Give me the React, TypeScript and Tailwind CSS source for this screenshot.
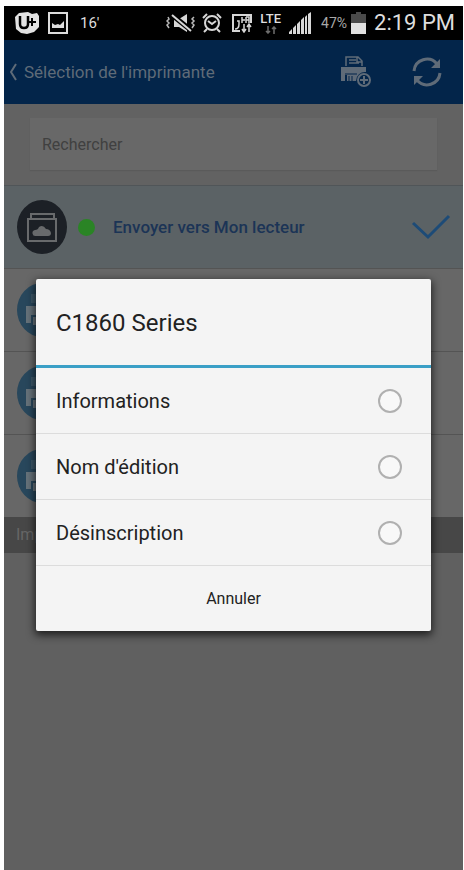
import React from "react";

function CarrierLogo() {
  return (
    <svg width="26" height="24" viewBox="0 0 26 24" aria-hidden="true">
      <path d="M1 6 5 2l9-1 4 2 5-1 2 3v11l-5 5-7 2-6-1-5-4z" fill="#e2e2e2" />
      <path d="M6 5v8q0 4 4 4t4-4V5" fill="none" stroke="#000" strokeWidth="2.5" />
      <path d="M15 11h7M18 7v8" fill="none" stroke="#000" strokeWidth="2" />
    </svg>
  );
}

function PictureIcon() {
  return (
    <svg width="20" height="24" viewBox="0 0 20 24" aria-hidden="true">
      <rect x="1" y="2" width="18" height="20" fill="none" stroke="#dcdcdc" strokeWidth="2" />
      <path d="M4 17v-5l3 2 3-1 2 1 4-4v7z" fill="#dcdcdc" />
    </svg>
  );
}

function MutedIcon() {
  return (
    <svg width="30" height="20" viewBox="0 0 30 20" fill="none" aria-hidden="true">
      <path d="M8 6h5l8-5v18l-8-5H8z" fill="#d6d6d6" />
      <path d="M6 2 26 18" stroke="#000" strokeWidth="5" />
      <path d="M6 2 25 18" stroke="#d6d6d6" strokeWidth="2" />
      <path d="m2 4 1 2-2 2 2 2-2 2 2 3M28 4l-2 2 2 2-2 2 2 2-2 3" stroke="#b9b9b9" strokeWidth="1.5" />
    </svg>
  );
}

function AlarmIcon() {
  return (
    <svg width="20" height="20" viewBox="0 0 20 20" fill="none" stroke="#d6d6d6" strokeWidth="2" aria-hidden="true">
      <circle cx="10" cy="10" r="7" />
      <path d="m6 8 4 3 4-3M1 5l4-4M19 5l-4-4M5 16l-3 3M15 16l3 3" />
    </svg>
  );
}

function CarModeIcon() {
  return (
    <svg width="20" height="20" viewBox="0 0 20 20" fill="none" stroke="#d6d6d6" strokeWidth="2" aria-hidden="true">
      <path d="M8 18H1V2h18v8" />
      <path d="M3 16q4 0 4-5V8H5M10 4v6M10 7h3M14 4v6M14 4h3v3h-3M17 7v3" strokeWidth="1.5" />
      <path d="M12 11v8M10 16l2 3 2-3M17 19v-7M15 14l2-3 2 3" strokeWidth="1.5" />
    </svg>
  );
}

function DataArrows() {
  return (
    <svg width="12" height="8" viewBox="0 0 12 8" fill="none" stroke="#6d6d6d" strokeWidth="1.5" aria-hidden="true">
      <path d="M3 0v7M1 5l2 2 2-2M9 8V1M7 3l2-2 2 2" />
    </svg>
  );
}

function SignalIcon() {
  return (
    <svg width="22" height="22" viewBox="0 0 22 22" fill="#d9d9d9" aria-hidden="true">
      <path d="M0 22v-2l3-3v5zM4 22v-6l3-3v9zM8 22V12l3-3v13zM12 22V8l3-3v17zM16 22V5l2-2v19zM19 22V2l3-2v22z" />
    </svg>
  );
}

function BatteryIcon() {
  return (
    <svg width="15" height="22" viewBox="0 0 15 22" aria-hidden="true">
      <path d="M5 0h5v2h5v10H0V2h5z" fill="#4b4b4b" />
      <path d="M0 11h15v11H0z" fill="#e0e0e0" />
    </svg>
  );
}

function StatusBar() {
  return (
    <div className="flex h-[34px] items-center bg-black pr-2 pl-[10px] text-[#dedede]">
      <CarrierLogo />
      <div className="ml-2">
        <PictureIcon />
      </div>
      <span className="ml-3 text-[15px] leading-5">16'</span>
      <div className="ml-auto flex items-center">
        <MutedIcon />
        <div className="ml-[6px]">
          <AlarmIcon />
        </div>
        <div className="ml-[10px]">
          <CarModeIcon />
        </div>
        <div className="ml-2 flex flex-col items-center">
          <span className="text-[13px] leading-[14px] font-medium">LTE</span>
          <DataArrows />
        </div>
        <div className="ml-2">
          <SignalIcon />
        </div>
        <span className="ml-[10px] text-[14px] leading-5 text-[#a8a8a8]">47%</span>
        <div className="ml-1">
          <BatteryIcon />
        </div>
        <span className="ml-2 text-[22px] leading-6">2:19 PM</span>
      </div>
    </div>
  );
}

function AddPrinterIcon() {
  return (
    <svg width="32" height="32" viewBox="0 0 32 32" fill="none" aria-hidden="true">
      <path d="M6 10V1h12l4 4v5M9 4h7M9 7h10M17 1v5h5" stroke="#5f6b78" strokeWidth="1.5" />
      <path d="M1 11h25v5a9 9 0 0 0-10 9H7v-6H5v6H1z" fill="#5f6b78" />
      <path d="M5 18h12M9 25v-5M12 25v-5" stroke="#03254a" strokeWidth="1" />
      <circle cx="24" cy="24" r="6" stroke="#5f6b78" strokeWidth="2" />
      <path d="M24 20v8M20 24h8" stroke="#5f6b78" strokeWidth="2" />
    </svg>
  );
}

function RefreshIcon() {
  return (
    <svg width="30" height="32" viewBox="0 0 30 32" fill="none" aria-hidden="true">
      <path d="M2 15A13 13 0 0 1 25 8M28 17A13 13 0 0 1 5 24" stroke="#5f6b78" strokeWidth="3" />
      <path d="M28 3v9h-9zM2 29V20h9z" fill="#5f6b78" />
    </svg>
  );
}

function Header() {
  return (
    <header className="flex h-16 items-center bg-[#03254a] pr-[21px] pl-[6px]">
      <button type="button" className="flex items-center gap-[7px] text-[17px] leading-6 text-[#5f6b78]">
        <svg width="7" height="18" viewBox="0 0 7 18" fill="none" aria-hidden="true">
          <path d="M6 1 1 9l5 8" stroke="#5f6b78" strokeWidth="2" />
        </svg>
        Sélection de l'imprimante
      </button>
      <button type="button" aria-label="Ajouter une imprimante" className="ml-auto">
        <AddPrinterIcon />
      </button>
      <button type="button" aria-label="Actualiser" className="ml-10">
        <RefreshIcon />
      </button>
    </header>
  );
}

function DriveBadge() {
  return (
    <svg width="52" height="54" viewBox="0 0 52 54" fill="none" aria-hidden="true">
      <ellipse cx="26" cy="27" rx="25" ry="27" fill="#1c2026" />
      <path d="M15 18v-4h23v4" stroke="#686a6c" strokeWidth="2" />
      <rect x="12" y="19" width="28" height="22" stroke="#686a6c" strokeWidth="2" />
      <path d="M20 36a3 3 0 0 1-1-6q3 0 4-3 4-3 7 2 4 0 5 4 0 3-3 3z" fill="#686a6c" />
    </svg>
  );
}

function PrinterBadge() {
  return (
    <svg width="52" height="54" viewBox="0 0 52 54" fill="none" aria-hidden="true">
      <ellipse cx="26" cy="27" rx="25" ry="27" fill="#28475c" />
      <path d="M15 20v-9h22v9" fill="#3d5869" />
      <path d="M10 23h32v17h-5v-8H15v8h-5z" fill="#66727a" />
      <path d="M17 34h18v8H17z" fill="#66727a" />
    </svg>
  );
}

function PrinterList() {
  return (
    <ul>
      <li className="flex h-[83px] items-center border-t border-[#505558] bg-[#5b6265] pr-3 pl-3">
        <DriveBadge />
        <span className="ml-[10px] h-[17px] w-[17px] rounded-full bg-[#2a8425]" />
        <span className="ml-[18px] text-[17px] leading-6 font-medium text-[#1b3456]">Envoyer vers Mon lecteur</span>
        <svg className="ml-auto" width="40" height="26" viewBox="0 0 40 26" fill="none" aria-hidden="true">
          <path d="m2 9 15 14L38 2" stroke="#1d4b77" strokeWidth="3" />
        </svg>
      </li>
      {[1, 2, 3].map((n) => (
        <li key={n} className="flex h-[83px] items-center border-t border-[#545454] bg-[#676767] pl-3">
          <PrinterBadge />
        </li>
      ))}
    </ul>
  );
}

const choices = ["Informations", "Nom d'édition", "Désinscription"];

function PrinterDialog() {
  return (
    <section
      role="dialog"
      aria-labelledby="printer-name"
      className="w-full rounded-[2px] bg-[#f4f4f4] text-[#222222] shadow-[0_3px_8px_1px_rgba(0,0,0,0.7)]"
    >
      <h1 id="printer-name" className="border-b-[3px] border-[#3a9fc6] px-5 pt-7 pb-[26px] text-[24px] leading-8">
        C1860 Series
      </h1>
      {choices.map((choice) => (
        <label key={choice} className="flex h-[66px] items-center justify-between border-b border-[#dcdcdc] pr-[29px] pl-5 text-[20px] leading-6">
          {choice}
          <input
            type="radio"
            name="printer-action"
            className="h-6 w-6 appearance-none rounded-full border-2 border-[#b0b0b0] bg-[#f8f8f8]"
          />
        </label>
      ))}
      <button type="button" className="h-[65px] w-full text-[16px] leading-6">
        Annuler
      </button>
    </section>
  );
}

export default function App() {
  return (
    <div className="min-h-screen bg-white pt-[6px] pr-px pl-1 font-[Roboto,sans-serif]">
      <div className="flex min-h-[calc(100vh-6px)] flex-col">
        <StatusBar />
        <div className="relative flex flex-1 flex-col bg-[#606060]">
          <Header />
          <div className="bg-[#626262] px-[26px] pt-[14px] pb-[15px]">
            <input
              type="search"
              aria-label="Rechercher"
              placeholder="Rechercher"
              className="block h-[52px] w-full bg-[#686868] px-3 text-[16px] leading-6 text-[#3c3c3c] shadow-[0_1px_1px_#5a5a5a] placeholder:text-[#404040]"
            />
          </div>
          <PrinterList />
          <h2 className="bg-[#474747] px-3 py-[6px] text-[16px] leading-6 text-[#666666]">Imp</h2>
          <div className="absolute inset-0 flex items-center px-8">
            <PrinterDialog />
          </div>
        </div>
      </div>
    </div>
  );
}
